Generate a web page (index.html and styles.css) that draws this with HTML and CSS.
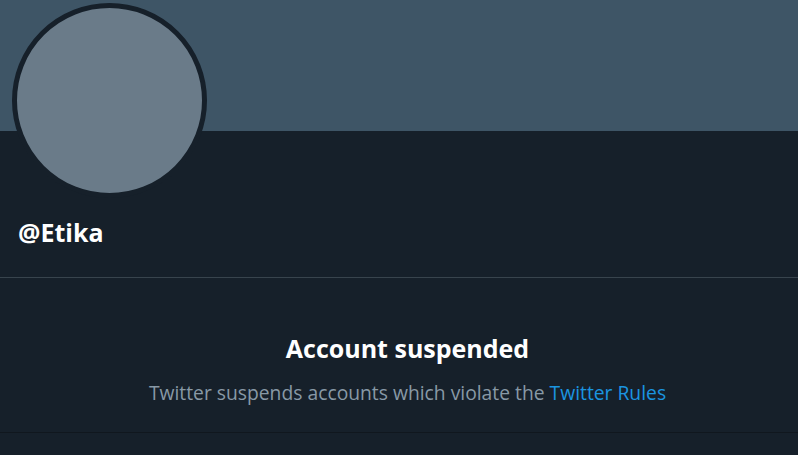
FILE: index.html
```html
<!DOCTYPE html>
<html>
<head>
<meta charset="utf-8">
<link rel="stylesheet" href="styles.css">
</head>
<body>
<div class="page">
  <div class="banner"></div>
  <div class="profile">
    <div class="avatar"></div>
    <div class="handle">@Etika</div>
  </div>
  <div class="suspended">
    <div class="title">Account suspended</div>
    <div class="desc">Twitter suspends accounts which violate the <a class="rules" href="#">Twitter Rules</a></div>
  </div>
</div>
</body>
</html>
```
FILE: styles.css
```css
html, body {
  margin: 0;
  padding: 0;
  background: #16202a;
  height: 100%;
  overflow: hidden;
}
.page {
  font-family: "Open Sans", "Noto Sans", sans-serif;
  color: #ffffff;
}
.banner {
  height: 131px;
  background: #3e5566;
}
.profile {
  padding: 0 18px 30px 18px;
  border-bottom: 1px solid #38444d;
}
.avatar {
  width: 185px;
  height: 185px;
  border-radius: 50%;
  background: #6a7b89;
  border: 5px solid #16202a;
  margin-top: -128px;
  margin-left: -6px;
}
.handle {
  margin-top: 19px;
  font-size: 25px;
  font-weight: 700;
  line-height: 30px;
}
.suspended {
  text-align: center;
  padding: 55px 0 27px 17px;
  border-bottom: 1px solid #10171e;
}
.title {
  font-size: 25px;
  font-weight: 700;
  line-height: 30px;
}
.desc {
  margin-top: 18px;
  font-size: 19.3px;
  line-height: 24px;
  color: #8899a6;
}
.rules {
  color: #1b95e0;
  text-decoration: none;
}
```
